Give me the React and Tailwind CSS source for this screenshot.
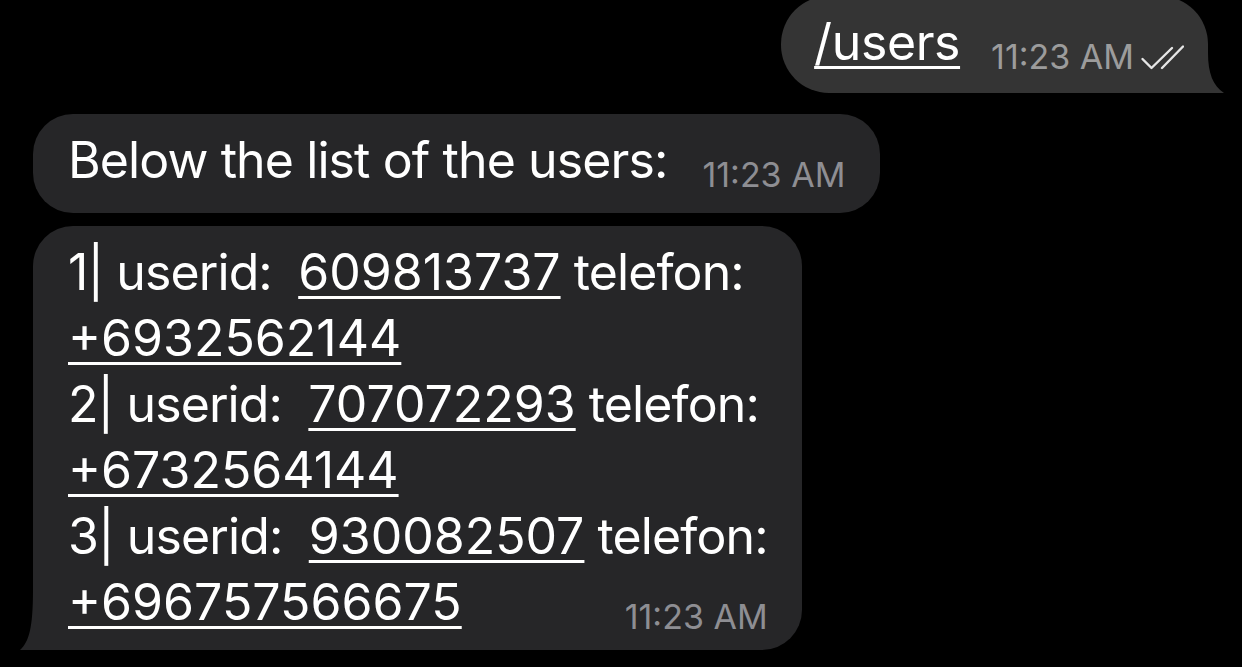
import React from 'react';

const font = { fontFamily: 'Inter, "Noto Sans", sans-serif' };

const link = 'underline decoration-[3px] underline-offset-[6px]';
const words = 'tracking-[-0.9px]';

const Time = ({ className = '' }) => (
  <span className={`shrink-0 whitespace-nowrap text-[34px] leading-[34px] ${className}`}>11:23 AM</span>
);

const ReadChecks = () => (
  <svg width="44" height="26" viewBox="0 0 44 26" className="mb-[4px] ml-[6px] shrink-0" fill="none" stroke="#e6e6e6" strokeWidth="2.4" strokeLinecap="round" strokeLinejoin="round">
    <path d="M2.5 14 L11.5 23 L32 3" />
    <path d="M22 23 L43 1.5" />
  </svg>
);

const OutTail = () => (
  <svg width="40" height="40" viewBox="0 0 40 40" className="absolute right-[-16px] bottom-0">
    <path d="M0 0 L24 0 C24 20 29 33 40 40 L0 40 Z" fill="#343434" />
  </svg>
);

const InTail = () => (
  <svg width="40" height="60" viewBox="0 0 40 60" className="absolute left-[-13px] bottom-0">
    <path d="M13 0 C13 38 9 52 0 60 L40 60 L40 0 Z" fill="#262628" />
  </svg>
);

const rows = [
  ['1', '609813737', '+6932562144'],
  ['2', '707072293', '+6732564144'],
  ['3', '930082507', '+696757566675'],
];

export default function App() {
  return (
    <div className="h-[667px] w-full overflow-hidden bg-black text-white" style={font}>
      <div className="flex flex-col">
        {/* outgoing */}
        <div className="-mt-[4px] flex justify-end pr-[34px]">
          <div className="relative flex items-end rounded-tl-[48px] rounded-tr-[48px] rounded-bl-[48px] bg-[#343434] pb-[18px] pl-[33px] pr-[24px] pt-[13px]">
            <span className={`text-[50px] leading-[66px] tracking-[-0.4px] ${link}`}>/users</span>
            <Time className="ml-[31px] mb-[1px] text-[#9c9c9c]" />
            <ReadChecks />
            <OutTail />
          </div>
        </div>

        {/* incoming: intro */}
        <div className="mt-[21px] pl-[33px]">
          <div className="flex w-fit items-end rounded-[40px] bg-[#262628] pb-[20px] pl-[35px] pr-[35px] pt-[13px]">
            <span className={`whitespace-nowrap text-[50px] leading-[66px] ${words}`}>Below the list of the users:</span>
            <Time className="ml-[35px] mb-[1px] text-[#8e8e93]" />
          </div>
        </div>

        {/* incoming: list */}
        <div className="mt-[13px] pl-[33px]">
          <div className="relative w-fit rounded-tl-[40px] rounded-tr-[40px] rounded-br-[40px] bg-[#262628] pb-[15px] pl-[35px] pr-[34px] pt-[13px] text-[50px] leading-[66px]">
            {rows.map(([n, id, tel], i) => (
              <React.Fragment key={n}>
                <div className="whitespace-pre">
                  <span className={words}>{`${n}| userid:  `}</span>
                  <span className={link}>{id}</span>
                  <span className={words}>{' telefon:'}</span>
                </div>
                {i < rows.length - 1 ? (
                  <div>
                    <span className={link}>{tel}</span>
                  </div>
                ) : (
                  <div className="flex items-end justify-between">
                    <span className={link}>{tel}</span>
                    <Time className="mb-[1px] text-[#8e8e93]" />
                  </div>
                )}
              </React.Fragment>
            ))}
            <InTail />
          </div>
        </div>
      </div>
    </div>
  );
}
